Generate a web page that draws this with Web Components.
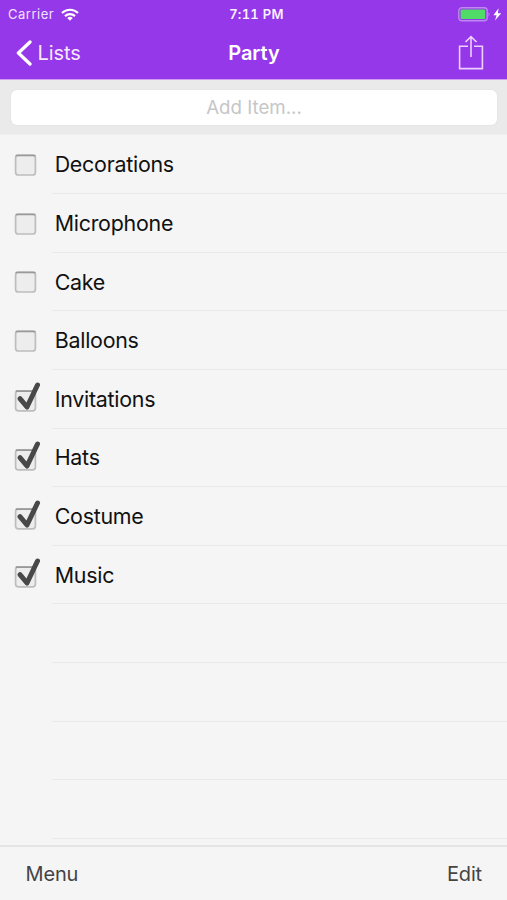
<!DOCTYPE html>
<html lang="en"><head><meta charset="utf-8"><title>Party</title>
<style>html,body{margin:0;height:100%;overflow:hidden}body{font-family:Inter,"Liberation Sans",sans-serif;background:#f5f5f5}</style></head>
<body>
<party-app></party-app>
<script>
function define(name, html){
  customElements.define(name, class extends HTMLElement{
    constructor(){super();this.attachShadow({mode:'open'}).innerHTML=html;}
  });
}
define('status-bar',`<style>
:host{display:grid;grid-template-columns:1fr auto 1fr;align-items:center;height:27px;color:#f3e2fd;font-size:13px;line-height:27px;padding:0 5px 0 8px}
.l{display:flex;align-items:center;gap:7px}.r{display:flex;justify-content:flex-end}
.c{letter-spacing:.5px;padding-top:1px}.t{font-weight:600;font-size:13px;letter-spacing:.3px;padding:1px 0 0 3px;color:#faf0ff;font-feature-settings:"tnum" 1}
svg{display:block}</style>
<div class="l"><span class="c">Carrier</span><svg width="18" height="13" viewBox="0 0 18 13" fill="none" stroke="#fff" stroke-width="2.2"><path d="M1 5A11.5 11.5 0 0 1 17 5M4 8.1A7.2 7.2 0 0 1 14 8.1"/><path d="M9 12.8L6.2 10A4 4 0 0 1 11.8 10Z" fill="#fff" stroke="none"/></svg></div>
<span class="t">7:11 PM</span>
<div class="r"><svg width="44" height="15" viewBox="0 0 44 15"><rect x=".8" y=".8" width="28.4" height="13" rx="3" fill="none" stroke="#be87f2" stroke-width="1.4"/><rect x="2.6" y="2.6" width="24.6" height="9.4" rx="1" fill="#50db66"/><path d="M30.5 5.2Q32.5 7.3 30.5 9.4Z" fill="#be87f2"/><path d="M40.6 1.2L35.4 8.2H38.6L37 13.6L43.2 6.2H39.9Z" fill="#fff"/></svg></div>`);
define('nav-bar',`<style>
:host{display:grid;grid-template-columns:1fr auto 1fr;align-items:center;height:52px;color:#f7e7ff;padding:0 23px 0 16px;font-size:20px}
.b{display:flex;align-items:center;gap:5.5px;letter-spacing:-.1px}.r{display:flex;justify-content:flex-end}svg{display:block}
.t{font-weight:600;color:#fff;letter-spacing:-.1px;padding-left:8px}</style>
<div class="b"><svg width="16" height="26" viewBox="0 0 16 26" fill="none" stroke="#fff" stroke-width="3.3" stroke-linecap="round" stroke-linejoin="round"><path d="M14 2L2.4 13L14 24"/></svg><span><slot name="back"></slot></span></div>
<span class="t"><slot></slot></span>
<div class="r"><svg width="26" height="36" viewBox="0 0 26 36" fill="none" stroke="#efcfff" stroke-width="1.6"><path d="M10 11.2H1.6V33.6H24.4V11.2H16M13 22V2M7.5 7L13 1.7L18.5 7"/></svg></div>`);
define('add-field',`<style>
:host{display:block;box-sizing:border-box;height:55px;padding:10px 10px 9px 11px;background:#eaeaea;border-bottom:1px solid #efefef}
div{background:#fff;border-radius:6px;height:35px;line-height:36px;text-align:center;font-size:18.7px;color:#c6c6c9;box-shadow:0 0 0 1px #e5e5e5}</style><div><slot></slot></div>`);
customElements.define('list-item',class extends HTMLElement{
  connectedCallback(){
    const done=this.hasAttribute('done'), empty=this.hasAttribute('empty');
    this.attachShadow({mode:'open'}).innerHTML=`<style>
:host{display:flex;height:58.62px;padding-left:10px;align-items:stretch;font-size:21.4px;letter-spacing:-.25px;color:#111}
.i{width:42px;display:flex;align-items:center}svg{display:block}
.x{flex:1;display:flex;align-items:center;border-bottom:1px solid #e9e9ea;padding-left:2.7px;box-sizing:border-box}</style>
<div class="i">${empty?'':`<svg width="34" height="40" viewBox="0 0 34 40"><rect x="5.6" y="${done?12:10.2}" width="19.8" height="19.8" rx="2.8" fill="#ededed" stroke="#bdbdbd" stroke-width="1.7"/><path d="M6.4 ${done?12.2:10.5}H24.8" stroke="#999" stroke-width="1.7" stroke-linecap="round"/>${done?'<path d="M10 19.6L17 28L27.5 6" fill="none" stroke="#484848" stroke-width="5" stroke-linecap="round" stroke-linejoin="round"/>':''}</svg>`}</div><div class="x"><span><slot></slot></span></div>`;
  }
});
define('tool-bar',`<style>
:host{display:flex;justify-content:space-between;align-items:center;box-sizing:border-box;height:55px;border-top:2px solid #e4e4e4;background:#f5f5f5;padding:0 25px 0 25.5px;font-size:20px;letter-spacing:-.15px;color:#444}</style><slot></slot>`);
define('party-app',`<style>
:host{display:flex;flex-direction:column;height:900px;width:507px;background:#f5f5f5}
header{flex:none;background:#9538ea;border-bottom:1px solid #cf9bf5}
main{flex:1;min-height:0;overflow:hidden;padding-top:.6px}
tool-bar,add-field{flex:none}</style>
<header><status-bar></status-bar><nav-bar><span slot="back">Lists</span>Party</nav-bar></header>
<add-field>Add Item...</add-field>
<main><list-item>Decorations</list-item><list-item>Microphone</list-item><list-item>Cake</list-item><list-item>Balloons</list-item><list-item done>Invitations</list-item><list-item done>Hats</list-item><list-item done>Costume</list-item><list-item done>Music</list-item><list-item empty></list-item><list-item empty></list-item><list-item empty></list-item><list-item empty></list-item></main>
<tool-bar><span>Menu</span><span>Edit</span></tool-bar>`);
</script></body></html>
